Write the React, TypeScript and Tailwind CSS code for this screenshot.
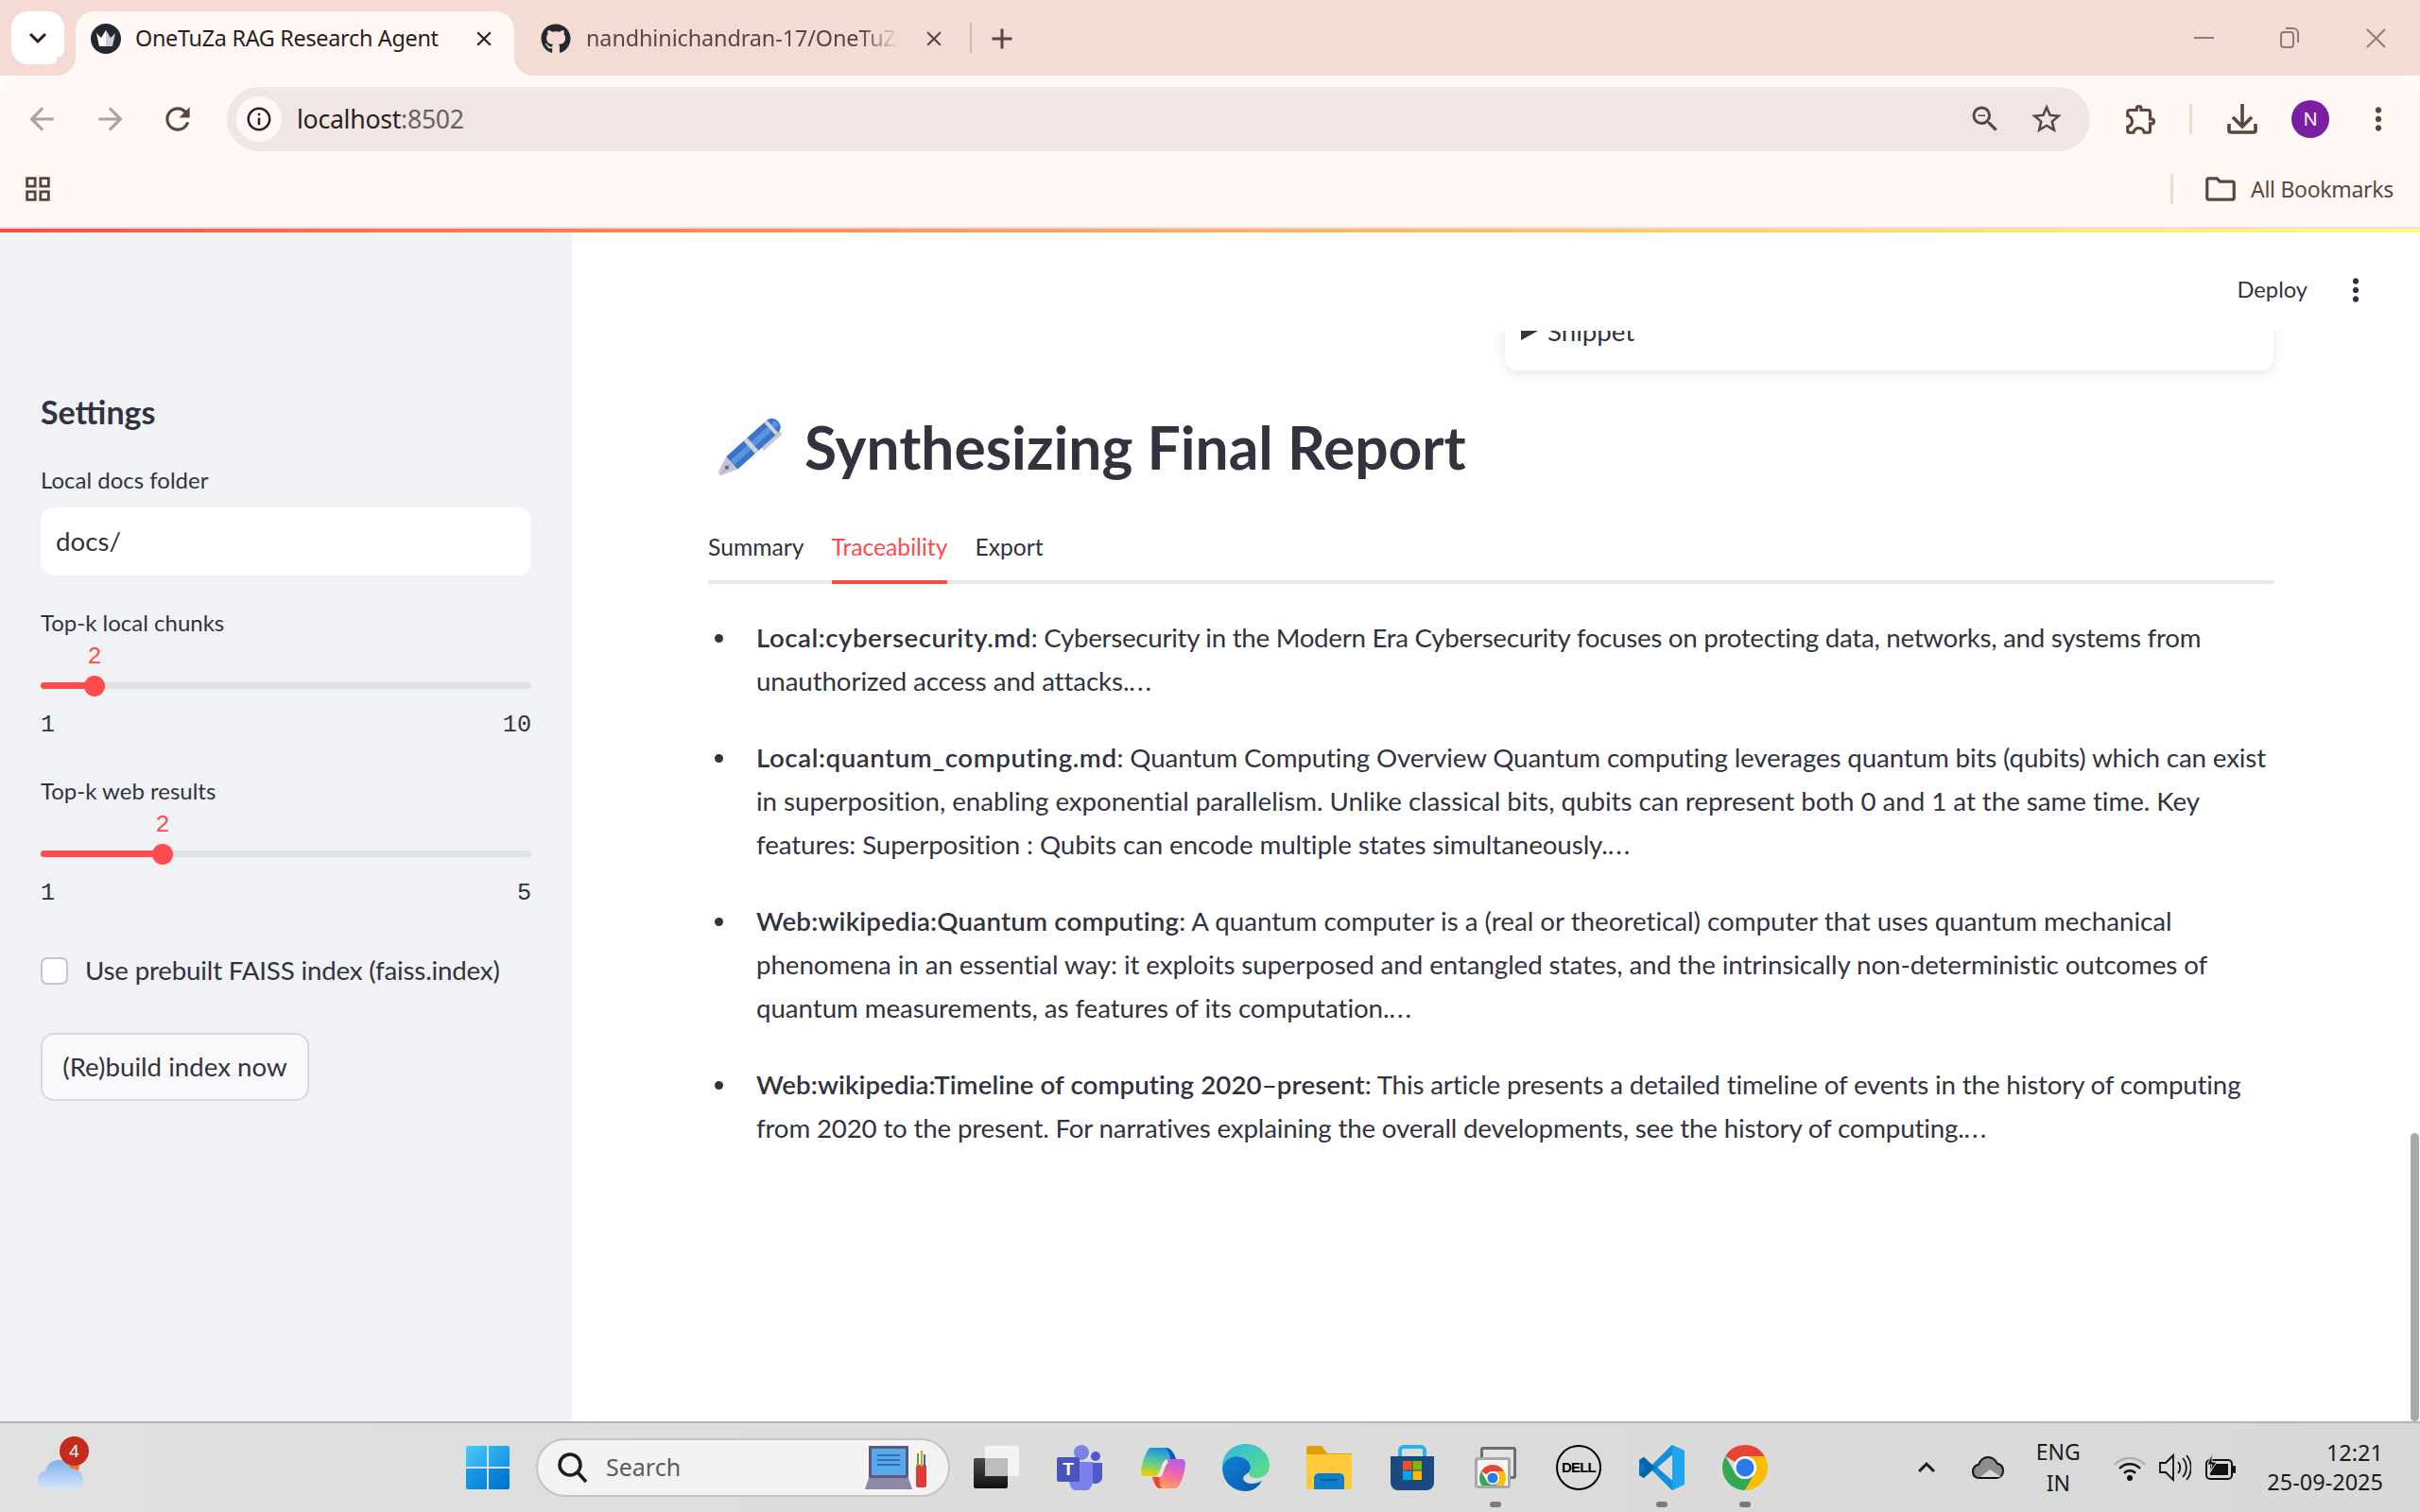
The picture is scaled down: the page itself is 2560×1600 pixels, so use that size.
import React from "react";
import { FaGithub } from "react-icons/fa";
import {
  MdArrowBack, MdArrowForward, MdRefresh, MdInfoOutline, MdZoomOut, MdStarBorder, MdOutlineExtension,
  MdMoreVert, MdOutlineFolder, MdClose, MdAdd, MdKeyboardArrowDown, MdOutlineGridView, MdKeyboardArrowUp,
} from "react-icons/md";

const Chrome = ({ s = 48 }: { s?: number }) => (
  <svg width={s} height={s} viewBox="0 0 48 48">
    <path fill="#ea4335" d="M24 0A24 24 0 0 1 44.78 12H24A12 12 0 0 0 13.6 18L3.22 12A24 24 0 0 1 24 0Z" />
    <path fill="#34a853" d="M3.22 12A24 24 0 0 0 24 48L34.39 30A12 12 0 0 1 13.61 30Z" />
    <path fill="#fbbc04" d="M44.78 12H24A12 12 0 0 1 34.39 30L24 48A24 24 0 0 0 44.78 12Z" />
    <circle cx="24" cy="24" r="12" fill="#fff" />
    <circle cx="24" cy="24" r="9.5" fill="#2a7ae9" />
  </svg>
);

const Win = () => (
  <div className="grid grid-cols-2 gap-[2px] w-[46px] h-[46px]">
    <div className="bg-gradient-to-br from-[#4cc8fb] to-[#21a6ee] rounded-tl-[2px]" />
    <div className="bg-gradient-to-br from-[#35b5f3] to-[#1592e4] rounded-tr-[2px]" />
    <div className="bg-gradient-to-br from-[#1a9be9] to-[#0a85da] rounded-bl-[2px]" />
    <div className="bg-gradient-to-br from-[#1089de] to-[#0074cf] rounded-br-[2px]" />
  </div>
);

const TaskView = () => (
  <svg width="48" height="46" viewBox="0 0 48 46">
    <defs>
      <linearGradient id="tv" x1="0" y1="0" x2="0" y2="1"><stop offset="0" stopColor="#4a4a4a" /><stop offset="1" stopColor="#111" /></linearGradient>
    </defs>
    <rect x="0" y="13" width="36" height="32" rx="2" fill="url(#tv)" />
    <rect x="12" y="0" width="36" height="32" rx="2" fill="#f7f7f7" fillOpacity="0.85" />
    <rect x="12" y="13" width="24" height="19" fill="#bdbdbd" />
  </svg>
);

const Teams = () => (
  <svg width="48" height="48" viewBox="0 0 48 48">
    <circle cx="41" cy="12" r="5" fill="#5059c9" />
    <path fill="#5059c9" d="M33 19h15v14a7 7 0 0 1-14 2Z" />
    <circle cx="26" cy="8" r="8" fill="#7b83eb" />
    <path fill="#7b83eb" d="M13 18h25v20a12 12 0 0 1-25 0Z" />
    <rect x="0" y="13" width="24" height="26" rx="2" fill="#4b53bc" />
    <text x="12" y="32" textAnchor="middle" fontSize="19" fontWeight="700" fill="#fff" fontFamily="'Liberation Sans',sans-serif">T</text>
  </svg>
);

const Copilot = () => (
  <svg width="47" height="43" viewBox="0 0 47 43">
    <defs>
      <linearGradient id="c1" x1="0.5" y1="0" x2="0.3" y2="1"><stop offset="0" stopColor="#1b8fe8" /><stop offset="0.55" stopColor="#5fd08a" /><stop offset="1" stopColor="#f5d000" /></linearGradient>
      <linearGradient id="c2" x1="0.7" y1="0" x2="0.4" y2="1"><stop offset="0" stopColor="#b45ee8" /><stop offset="0.5" stopColor="#f266a8" /><stop offset="1" stopColor="#ffa25a" /></linearGradient>
    </defs>
    <path fill="url(#c1)" d="M10 0H27C32 0 35 6 37 12H30C25 12 23 15 22 19L19 26C18 29 16 30 14 30H3C1 30 0 28 0 25 1 16 4 8 7 3 8 1 9 0 10 0Z" />
    <path fill="#1650c8" d="M26 0C31 0 35 6 37 12H31C31 7 29 3 26 0Z" />
    <path fill="url(#c2)" d="M31 12H44C46 12 47 15 47 18 46 27 43 36 40 40 39 42 37 43 35 43H20C16 43 14 37 12 31H15C18 31 21 29 22 25L25 17C26 14 28 12 31 12Z" />
    <path fill="#e8452e" d="M12 31H20C19 36 20 41 22 43H20C16 43 14 37 12 31Z" />
    <path stroke="#f6e8ee" strokeWidth="3" fill="none" d="M28 14C25 16 24 20 22 26 21 29 20 30 18 30" />
  </svg>
);

const Edge = () => (
  <svg width="50" height="50" viewBox="0 0 50 50">
    <defs>
      <linearGradient id="e1" x1="0" y1="0" x2="1" y2="1"><stop offset="0" stopColor="#2cb9e8" /><stop offset="1" stopColor="#5fe07c" /></linearGradient>
      <linearGradient id="e2" x1="0" y1="0" x2="1" y2="1"><stop offset="0" stopColor="#0f82d8" /><stop offset="1" stopColor="#0a58a8" /></linearGradient>
    </defs>
    <path fill="url(#e2)" d="M25 50C10 50 0 39 0 25 2 17 8 13 15 13c9 0 15 6 15 12 0 4-3 6-6 8-4 3-1 9 7 9 4 0 8-1 11-3-4 7-10 11-17 11Z" />
    <path fill="url(#e1)" d="M0 25C0 10 11 0 25 0c14 0 25 10 25 23 0 8-6 13-13 13-6 0-9-2-9-5 0-2 2-3 2-6 0-6-6-12-15-12C8 13 2 18 0 25Z" />
  </svg>
);

const FolderIco = () => (
  <svg width="48" height="46" viewBox="0 0 48 46">
    <path fill="#e0a100" d="M0 3a3 3 0 0 1 3-3h13l6 8h26v10H0Z" />
    <path fill="#ffca3e" d="M0 9h48v35a2 2 0 0 1-2 2H2a2 2 0 0 1-2-2Z" />
    <path fill="#0f7ecb" d="M8 46V34a5 5 0 0 1 5-5h22a5 5 0 0 1 5 5v12Z" />
    <rect x="15" y="35" width="18" height="2" fill="#0a5a9c" />
  </svg>
);

const Store = () => (
  <svg width="46" height="48" viewBox="0 0 46 48">
    <path fill="none" stroke="#2bb3ee" strokeWidth="4" d="M10 14V6a4 4 0 0 1 4-4h18a4 4 0 0 1 4 4v8" />
    <path fill="#1d4a7e" d="M0 12h46v28a8 8 0 0 1-8 8H8a8 8 0 0 1-8-8Z" />
    <rect x="13" y="17" width="9.5" height="9.5" fill="#f25022" />
    <rect x="23.5" y="17" width="9.5" height="9.5" fill="#7fba00" />
    <rect x="13" y="27.5" width="9.5" height="9.5" fill="#00a4ef" />
    <rect x="23.5" y="27.5" width="9.5" height="9.5" fill="#ffb900" />
  </svg>
);

const ChromeApp = () => (
  <div className="relative w-[44px] h-[44px]">
    <div className="absolute right-0 top-0 w-[38px] h-[34px] rounded-[3px] border-[3px] border-[#6e6e6e] bg-[#e4e4e4]" />
    <div className="absolute left-0 bottom-0 w-[38px] h-[33px] rounded-[3px] border-[3px] border-[#a8a8a8] bg-[#f4f4f4] overflow-hidden flex justify-center pt-[5px]">
      <Chrome s={28} />
    </div>
  </div>
);

const Dell = () => (
  <div className="w-[48px] h-[48px] rounded-full border-[2px] border-black flex items-center justify-center font-['Liberation_Sans',sans-serif] font-bold text-[15px] tracking-[-0.8px] text-black">
    DELL
  </div>
);

const VSCode = () => (
  <svg width="48" height="48" viewBox="0 0 48 48">
    <path fill="#0a75bd" d="M35 0 14 21 5 13 0 16v16l5 3 9-8 21 21 0-10-16-14 16-14Z" />
    <path fill="#0065a9" d="M0 16l5-3 11 11-11 11-5-3 7-8Z" />
    <path fill="#1ea5f0" d="M35 0l13 6v36l-13 6Z" />
    <path fill="#0f8fdc" d="M14 21 35 0v10L19 24l16 14v10L14 27l5-3Z" />
  </svg>
);

const Pen = () => (
  <svg width="68" height="68" viewBox="0 0 68 68" className="overflow-visible">
    <g transform="rotate(48 34 34)">
      <path fill="#c9c9d0" d="M43 -2h4v26h-4Z" />
      <path fill="#3a76c8" d="M25 0a9 8 0 0 1 18 0v58H25Z" />
      <path fill="#5b93de" d="M31 -6h6v64h-6Z" />
      <rect x="25" y="0" width="18" height="4" fill="#d2d2d8" />
      <rect x="25" y="28" width="18" height="5" fill="#d2d2d8" />
      <path fill="#c9c5d6" d="M25 58h18L36 75l-2 1-3-2Z" />
      <path fill="#a89fd0" d="M33 58h2l1 17-2 1Z" opacity="0.4" />
      <circle cx="34" cy="65" r="2.2" fill="#6e6880" />
    </g>
  </svg>
);

const Cloud = () => (
  <svg width="52" height="32" viewBox="0 0 52 32">
    <defs>
      <linearGradient id="cl" x1="0" y1="0" x2="0" y2="1"><stop offset="0" stopColor="#7fb0ec" /><stop offset="1" stopColor="#d6e6fa" /></linearGradient>
    </defs>
    <circle cx="36" cy="8" r="8" fill="#e8792b" />
    <path fill="url(#cl)" d="M10 32C4 32 0 28 0 22s4-9 8-9c1-7 7-12 14-12 6 0 11 3 13 9 7 0 13 5 13 11 0 7-4 11-10 11Z" />
  </svg>
);

const Laptop = () => (
  <svg width="66" height="46" viewBox="0 0 66 46">
    <rect x="4" y="0" width="42" height="34" rx="1" fill="#5b5a7c" />
    <rect x="7" y="3" width="36" height="28" fill="#58a8ea" />
    <g fill="#2f6fae"><rect x="13" y="9" width="24" height="2" /><rect x="13" y="14" width="24" height="2" /><rect x="13" y="19" width="24" height="2" /></g>
    <path fill="#8d88a8" d="M4 34h42l4 12H0Z" />
    <rect x="54" y="20" width="11" height="24" rx="2" fill="#e03a3a" />
    <rect x="55" y="8" width="2" height="14" fill="#6a9a3a" />
    <rect x="59" y="5" width="2" height="17" fill="#d8a020" />
    <rect x="62" y="9" width="2" height="13" fill="#3a6ac0" />
  </svg>
);

const Crown = () => (
  <div className="w-[32px] h-[32px] rounded-full bg-[#262730] flex items-center justify-center">
    <svg width="24" height="20" viewBox="0 0 24 20">
      <path fill="#fff" d="M2 4l5 5 5-8 3 5v12H5Z" />
      <path fill="#c9cdd4" d="M12 1l5 8 5-5-3 14h-7Z" />
    </svg>
  </div>
);

const Row = ({ children }: { children: React.ReactNode }) => <div>{children}</div>;

const Slider = ({ pct, max }: { pct: number; max: string }) => (
  <div className="flex flex-col mt-[6px]">
    <div className="h-[26px] relative text-[25.2px] leading-[26px] text-[#ff4b4b] font-['Liberation_Mono',monospace]">
      <span className="absolute -translate-x-1/2" style={{ left: `${pct}px` }}>2</span>
    </div>
    <div className="relative h-[7px] rounded-full bg-[#dde1ea] mt-[13px]">
      <div className="absolute left-0 top-0 h-full rounded-full bg-[#ff4b4b]" style={{ width: `${pct}px` }} />
      <div className="absolute w-[22px] h-[22px] rounded-full bg-[#ff4b4b] top-[-7px] -translate-x-1/2" style={{ left: `${pct}px` }} />
    </div>
    <div className="flex justify-between mt-[24px] h-[30px] leading-[30px] text-[25.2px] text-[#31333f] font-['Liberation_Mono',monospace]">
      <span>1</span>
      <span>{max}</span>
    </div>
  </div>
);

const Bullet = ({ children }: { children: React.ReactNode }) => (
  <li className="flex">
    <span className="w-[51px] shrink-0 pl-[7px] pt-[19px]"><span className="block w-[9px] h-[9px] rounded-full bg-[#31333f]" /></span>
    <div>{children}</div>
  </li>
);

const Dots = () => <span className="tracking-[2px]">...</span>;

export default function App() {
  return (
    <div className="w-[2560px] h-[1600px] flex flex-col overflow-hidden bg-white font-['Lato',sans-serif] text-[#31333f]">
      {/* Tab strip */}
      <div className="h-[80px] bg-[#f4dcd4] flex items-start pl-[12px] relative font-['Noto_Sans',sans-serif]">
        <div className="w-[56px] h-[56px] mt-[12px] rounded-[18px] bg-white flex items-center justify-center">
          <MdKeyboardArrowDown size={36} className="text-[#2a1f1a]" />
        </div>
        <div className="relative w-[464px] h-[68px] mt-[12px] ml-[12px] bg-[#fff8f5] rounded-t-[20px] flex items-center pl-[16px] pb-[10px]">
          <Crown />
          <span className="ml-[15px] text-[23.4px] tracking-[-0.3px] text-[#2a1f1a] whitespace-nowrap">OneTuZa RAG Research Agent</span>
          <MdClose size={26} className="absolute left-[419px] top-[16px] text-[#2a1f1a]" />
          <div className="absolute left-[-20px] bottom-0 w-[20px] h-[20px] bg-[#fff8f5]"><div className="w-full h-full bg-[#f4dcd4] rounded-br-[20px]" /></div>
          <div className="absolute right-[-20px] bottom-0 w-[20px] h-[20px] bg-[#fff8f5]"><div className="w-full h-full bg-[#f4dcd4] rounded-bl-[20px]" /></div>
        </div>
        <div className="relative h-[68px] mt-[12px] flex items-center pl-[28px] pb-[10px] w-[500px]">
          <FaGithub size={32} className="text-[#24292f]" />
          <span className="ml-[16px] w-[330px] overflow-hidden whitespace-nowrap text-[23.4px] tracking-[-0.1px] text-[#5a463e] [mask-image:linear-gradient(to_right,black_88%,transparent)]">nandhinichandran-17/OneTuZa</span>
          <MdClose size={26} className="absolute left-[431px] top-[16px] text-[#5a463e]" />
          <div className="absolute left-[482px] top-[12px] w-[2px] h-[32px] bg-[#cdb8b0]" />
        </div>
        <MdAdd size={36} className="mt-[23px] ml-[-2px] text-[#5a463e]" />
        <div className="ml-auto h-[80px] flex items-center text-[#8a7d78] pr-[36px]">
          <div className="w-[21px] h-[2px] bg-[#8a7d78]" />
          <svg className="ml-[70px]" width="20" height="22" viewBox="0 0 20 22" fill="none" stroke="#8a7d78" strokeWidth="2"><rect x="1" y="5" width="13" height="16" rx="3" /><path d="M6 1h8a5 5 0 0 1 5 5v10" /></svg>
          <svg className="ml-[71px]" width="21" height="21" viewBox="0 0 21 21" stroke="#8a7d78" strokeWidth="2"><path d="M1 1l19 19M20 1L1 20" /></svg>
        </div>
      </div>
      {/* Toolbar */}
      <div className="h-[160px] bg-[#fff8f5] rounded-t-[20px] flex flex-col font-['Noto_Sans',sans-serif]">
        <div className="h-[80px] pt-[12px] flex items-center pl-[25px] pr-[24px]">
          <MdArrowBack size={38} className="text-[#aaa3a0]" />
          <MdArrowForward size={38} className="text-[#aaa3a0] ml-[35px]" />
          <MdRefresh size={38} className="text-[#5a463e] ml-[33px]" />
          <div className="ml-[33px] w-[1971px] h-[68px] rounded-full bg-[#f0e6e6] flex items-center pl-[10px] pr-[27px]">
            <div className="w-[48px] h-[48px] rounded-full bg-[#fff8f5] flex items-center justify-center"><MdInfoOutline size={30} className="text-[#2a1f1a]" /></div>
            <span className="ml-[16px] text-[26.7px] tracking-[-0.3px] text-[#2a1f1a]">localhost<span className="text-[#6e5f59]">:8502</span></span>
            <MdZoomOut size={36} className="ml-auto text-[#5a463e]" />
            <MdStarBorder size={38} className="ml-[28px] text-[#5a463e]" />
          </div>
          <MdOutlineExtension size={38} className="ml-[35px] text-[#5a463e]" />
          <div className="ml-[32px] w-[3px] h-[32px] rounded bg-[#f4d6cc]" />
          <svg className="ml-[37px]" width="32" height="32" viewBox="0 0 32 32" fill="none" stroke="#5a463e" strokeWidth="3.6"><path d="M16 0v23M6 14l10 10 10-10" /><path d="M2 21v7a2 2 0 0 0 2 2h24a2 2 0 0 0 2-2v-7" /></svg>
          <div className="ml-[36px] w-[40px] h-[40px] rounded-full bg-[#7b1fa2] flex items-center justify-center text-white text-[20px]">N</div>
          <MdMoreVert size={38} className="ml-[33px] text-[#5a463e]" />
        </div>
        <div className="flex-1 flex items-center pl-[23px] pr-[28px]">
          <MdOutlineGridView size={34} className="text-[#5a463e]" />
          <div className="ml-auto w-[3px] h-[32px] rounded bg-[#f4d6cc]" />
          <MdOutlineFolder size={38} className="ml-[31px] text-[#5a463e]" />
          <span className="ml-[13px] text-[23px] tracking-[-0.3px] text-[#5a463e]">All Bookmarks</span>
        </div>
      </div>
      <div className="h-[2px] bg-[#f4dcd4]" />
      <div className="h-[4px] bg-gradient-to-r from-[#ff4b4b] to-[#fffd80]" />
      {/* App body */}
      <div className="flex-1 min-h-0 flex relative">
        <aside className="w-[605px] shrink-0 bg-[#f0f2f6] pl-[43px] pr-[43px] pt-[167px]">
          <h2 className="h-[46px] leading-[46px] text-[34px] font-bold">Settings</h2>
          <div className="mt-[31px] h-[36px] leading-[36px] text-[24px]">Local docs folder</div>
          <div className="mt-[11px] h-[72px] rounded-[14px] bg-white flex items-center pl-[16px] text-[27.7px]">docs/</div>
          <div className="mt-[32px] h-[36px] leading-[36px] text-[24px]">Top-k local chunks</div>
          <Slider pct={57} max="10" />
          <div className="mt-[36px] h-[36px] leading-[36px] text-[24px]">Top-k web results</div>
          <Slider pct={129} max="5" />
          <div className="mt-[43px] flex items-center h-[46px]">
            <div className="w-[29px] h-[29px] rounded-[7px] border-2 border-[#c4c6cc] bg-white" />
            <span className="ml-[18px] text-[27.7px] tracking-[-0.18px]">Use prebuilt FAISS index (faiss.index)</span>
          </div>
          <div className="mt-[43px] w-[284px] h-[72px] rounded-[14px] border-2 border-[#d8dae0] bg-[#f9f9fb] flex items-center justify-center text-[27.7px]">(Re)build index now</div>
        </aside>
        <main className="flex-1 min-w-0 relative overflow-hidden pl-[144px] pr-[155px] flex flex-col bg-white">
          <div className="absolute top-0 left-0 right-0 h-[104px] bg-white flex items-start z-10 justify-end pt-[42px] pr-[49px]">
            <span className="text-[23.7px] leading-[36px]">Deploy</span>
            <MdMoreVert size={38} className="ml-[32px] text-[#31333f]" />
          </div>
          <div className="self-end w-[813px] h-[146px] rounded-[14px] bg-white shadow-[0_3px_14px_rgba(0,0,0,0.1)] flex items-end pl-[17px] pb-[18px] text-[27.7px] leading-[46px] shrink-0">
            <svg className="mb-[14px]" width="18" height="20" viewBox="0 0 18 20"><path fill="#31333f" d="M0 0l18 10L0 20Z" /></svg>
            <span className="ml-[10px]">Snippet</span>
          </div>
          <h1 className="mt-[37px] h-[90px] flex items-center text-[62.3px] font-bold whitespace-nowrap">
            <span className="ml-[9px] mr-[25px] flex"><Pen /></span>
            Synthesizing Final Report
          </h1>
          <div className="mt-[25px] h-[74px] border-b-4 border-[#e8e8e8] flex text-[24.7px] gap-[29px]">
            <div className="h-[74px] pb-[4px] flex items-center">Summary</div>
            <div className="h-[74px] flex items-center border-b-4 border-[#ff4b4b] text-[#ff4b4b]">Traceability</div>
            <div className="h-[74px] pb-[4px] flex items-center">Export</div>
          </div>
          <ul className="mt-[34px] flex flex-col gap-[35px] text-[27.7px] leading-[46px] whitespace-nowrap">
            <Bullet>
              <strong className="font-semibold tracking-[0.5px]">Local:cybersecurity.md</strong>
              <span className="tracking-[-0.28px]">: Cybersecurity in the Modern Era Cybersecurity focuses on protecting data, networks, and systems from</span><br />
              <span className="tracking-[-0.1px]">unauthorized access and attacks.</span><Dots />
            </Bullet>
            <Bullet>
              <strong className="font-semibold tracking-[0.55px]">Local:quantum_computing.md</strong>
              <span className="tracking-[-0.12px]">: Quantum Computing Overview Quantum computing leverages quantum bits (qubits) which can exist</span><br />
              <span className="tracking-[-0.03px]">in superposition, enabling exponential parallelism. Unlike classical bits, qubits can represent both 0 and 1 at the same time. Key</span><br />
              <span className="tracking-[-0.08px]">features: Superposition : Qubits can encode multiple states simultaneously.</span><Dots />
            </Bullet>
            <Bullet>
              <strong className="font-semibold tracking-[0.2px]">Web:wikipedia:Quantum computing</strong>
              <span className="tracking-[0.01px]">: A quantum computer is a (real or theoretical) computer that uses quantum mechanical</span><br />
              <span className="tracking-[-0.07px]">phenomena in an essential way: it exploits superposed and entangled states, and the intrinsically non-deterministic outcomes of</span><br />
              <span className="tracking-[-0.05px]">quantum measurements, as features of its computation.</span><Dots />
            </Bullet>
            <Bullet>
              <strong className="font-semibold tracking-[0.08px]">Web:wikipedia:Timeline of computing 2020–present</strong>
              <span className="tracking-[-0.14px]">: This article presents a detailed timeline of events in the history of computing</span><br />
              <span className="tracking-[-0.17px]">from 2020 to the present. For narratives explaining the overall developments, see the history of computing.</span><Dots />
            </Bullet>
          </ul>
          <div className="absolute right-[1px] bottom-0 w-[9px] h-[305px] rounded-full bg-[#a9a9a9]" />
        </main>
      </div>
      {/* Taskbar */}
      <div className="h-[96px] shrink-0 border-t-2 border-[#b5b5b5] bg-gradient-to-r from-[#dfe1de] to-[#d8d8d8] flex items-center font-['Noto_Sans',sans-serif]">
        <div className="w-[472px] shrink-0 pl-[40px] pt-[14px] relative">
          <Cloud />
          <div className="absolute left-[63px] top-[-10px] w-[31px] h-[31px] rounded-full bg-[#c42b1c] text-white text-[18px] flex items-center justify-center">4</div>
        </div>
        <div className="w-[88px] flex justify-center"><Win /></div>
        <div className="ml-[7px] w-[438px] h-[62px] rounded-full bg-[#f3f3f3] border-2 border-[#c4c4c4] flex items-center pl-[20px] pr-[22px]">
          <svg width="34" height="34" viewBox="0 0 34 34" fill="none" stroke="#1c1c1c" strokeWidth="3.5"><circle cx="14" cy="14" r="11" /><path d="M22 22l9 10" /></svg>
          <span className="ml-[18px] text-[25px] text-[#5c5c5c]">Search</span>
          <span className="ml-auto flex"><Laptop /></span>
        </div>
        <div className="ml-[5px] flex">
          {[<TaskView key="a" />, <Teams key="b" />, <Copilot key="c" />, <Edge key="d" />, <FolderIco key="e" />, <Store key="f" />, <ChromeApp key="g" />, <Dell key="h" />, <VSCode key="i" />, <Chrome key="j" />].map((ic, i) => (
            <div key={i} className="relative w-[88px] h-[60px] flex items-center justify-center">
              {ic}
              {(i === 6 || i === 8 || i === 9) && <div className="absolute bottom-[-12px] left-[38px] w-[12px] h-[6px] rounded-full bg-[#7a7a7a]" />}
            </div>
          ))}
        </div>
        <div className="ml-auto flex items-center pr-[39px] text-[#1c1c1c]">
          <MdKeyboardArrowUp size={36} />
          <svg className="ml-[30px]" width="34" height="24" viewBox="0 0 34 24"><path d="M8 23C3 23 1 20 1 16s3-7 6-7c2-5 6-8 10-8 5 0 8 3 10 7 3 0 6 3 6 7 0 5-3 8-7 8Z" fill="#8e8e8e" stroke="#111" strokeWidth="2" /><path d="M9 22l10-8 12 8Z" fill="#d8d8d8" /></svg>
          <div className="ml-[24px] w-[66px] text-center text-[23px] leading-[33px]"><Row>ENG</Row><Row>IN</Row></div>
          <svg className="ml-[26px]" width="34" height="28" viewBox="0 0 34 28" fill="none"><path d="M1 11a22 22 0 0 1 32 0" stroke="#aaa" strokeWidth="2" /><path d="M6 15a15 15 0 0 1 22 0M11 20a8 8 0 0 1 12 0" stroke="#111" strokeWidth="2.4" /><circle cx="17" cy="25" r="3" fill="#111" /></svg>
          <svg className="ml-[14px]" width="34" height="32" viewBox="0 0 34 32" fill="none" stroke="#111" strokeWidth="1.8"><path d="M1 11h6l8-8v26l-8-8H1Z" /><path d="M20 10a9 9 0 0 1 0 12M25 6a15 15 0 0 1 0 20M29 3a20 20 0 0 1 0 26" /></svg>
          <svg className="ml-[14px]" width="34" height="30" viewBox="0 0 34 30"><rect x="2" y="7" width="27" height="20" rx="4" fill="none" stroke="#111" strokeWidth="2" /><rect x="6" y="11" width="19" height="12" fill="#111" /><rect x="30" y="13" width="3" height="8" rx="1" fill="#111" /><path d="M8 0 3 12h5l-2 8 7-11H8Z" fill="#111" stroke="#d8d8d8" strokeWidth="1" /></svg>
          <div className="ml-[32px] text-right text-[23.5px] leading-[31px] whitespace-nowrap"><Row>12:21</Row><Row>25-09-2025</Row></div>
        </div>
      </div>
    </div>
  );
}
